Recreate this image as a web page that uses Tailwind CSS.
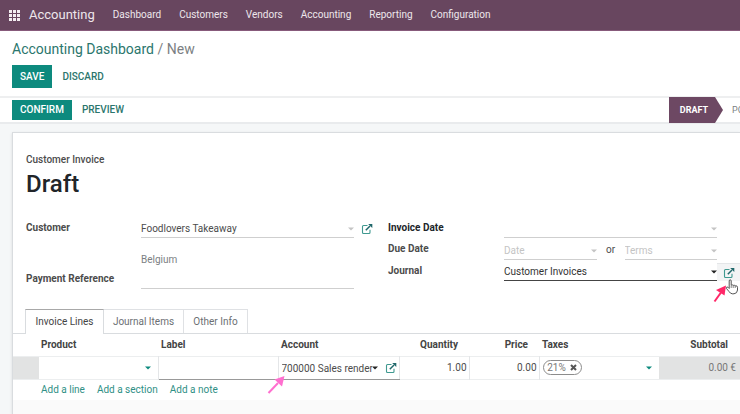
<!DOCTYPE html>
<html lang="en">
  <head>
    <meta charset="UTF-8" />
    <meta name="viewport" content="width=device-width, initial-scale=1.0" />
    <title>New - Accounting</title>
    <script src="https://cdn.jsdelivr.net/npm/@tailwindcss/browser@4"></script>
  </head>
  <body class="font-['Roboto',sans-serif] text-[10px] leading-4 text-[#4c4c4c] bg-[#f5f7f8]">
    <!-- Shared icons -->
    <svg class="hidden">
      <symbol id="external" viewBox="0 0 12 12">
        <path d="M6.5 2.5H2.5Q1.5 2.5 1.5 3.5V9.5Q1.5 10.5 2.5 10.5H8Q9 10.5 9 9.5V6.8" fill="none" stroke="#3f9990" stroke-width="1.1" />
        <path d="M4.8 7.2L9 3" fill="none" stroke="#20686b" stroke-width="1.5" />
        <path d="M7.2 1H11.3V5.1Z" fill="#20686b" />
      </symbol>
      <symbol id="caret" viewBox="0 0 6 4">
        <path d="M0 0.5H6L3 3.5Z" fill="currentColor" />
      </symbol>
    </svg>

    <div class="min-h-screen flex flex-col overflow-hidden">
      <!-- Navbar -->
      <header class="h-[31px] shrink-0 flex items-center pl-[9px] bg-[#68465f] border-b border-[#875a7b] text-[#eee6ec]">
        <button aria-label="Apps" class="mr-[9px]">
          <svg class="w-[11px] h-[11px]" viewBox="0 0 11 11" fill="#f3edf1">
            <path d="M0 0h3v3H0zM4 0h3v3H4zM8 0h3v3H8zM0 4h3v3H0zM4 4h3v3H4zM8 4h3v3H8zM0 8h3v3H0zM4 8h3v3H4zM8 8h3v3H8z" />
          </svg>
        </button>
        <a href="#" class="text-[13px] mr-[18px]">Accounting</a>
        <nav class="flex gap-[18px]">
          <a href="#">Dashboard</a>
          <a href="#">Customers</a>
          <a href="#">Vendors</a>
          <a href="#">Accounting</a>
          <a href="#">Reporting</a>
          <a href="#">Configuration</a>
        </nav>
      </header>

      <!-- Control panel -->
      <div class="bg-white pl-3 pt-2 pb-2 border-b-2 border-[#eeeff0]">
        <div class="text-[14px] leading-5 text-[#7c7f83]">
          <a href="#" class="text-[#2b766d]">Accounting Dashboard</a> / <span>New</span>
        </div>
        <div class="flex items-center mt-[6px]">
          <button class="h-[23px] px-2 bg-[#0d8a7e] text-white font-medium">SAVE</button>
          <button class="h-[23px] px-[10px] text-[#2b766d] font-medium">DISCARD</button>
        </div>
      </div>

      <!-- Status bar -->
      <div class="bg-white pl-3 flex items-center justify-between h-[26px] shrink-0 border-b-2 border-[#e9ebed]">
        <div class="flex items-center">
          <button class="h-5 px-2 bg-[#0d8a7e] text-white font-medium">CONFIRM</button>
          <button class="h-5 px-[10px] text-[#2b766d] font-medium">PREVIEW</button>
        </div>
        <div class="flex w-[71px] h-[26px] overflow-hidden text-[9px]">
          <button class="w-[54px] h-[26px] shrink-0 pr-1 bg-[#6d4863] text-white font-bold [clip-path:polygon(0_0,46px_0,54px_50%,46px_100%,0_100%)]">DRAFT</button>
          <button class="shrink-0 pl-[9px] text-[#7c7f83]">POSTED</button>
        </div>
      </div>

      <!-- Invoice sheet -->
      <main class="flex-1 flex flex-col bg-white ml-3 mt-2 border-l border-t border-[#d9dcdf] shadow-sm">
        <div class="pl-[13px] pt-[19px]">
          <div class="font-medium">Customer Invoice</div>
          <h1 class="font-medium text-[24px] leading-8 text-[#212529]">Draft</h1>
        </div>

        <form class="grid grid-cols-[362fr_352fr] pl-[13px] mt-[17px]">
          <div class="grid grid-cols-[115px_1fr_34px] content-start">
            <label for="customer" class="font-bold pt-[3px]">Customer</label>
            <div class="relative h-[21px] border-b border-[#cfcfcf]">
              <select id="customer" class="appearance-none w-full h-5 pt-[3px]">
                <option>Foodlovers Takeaway</option>
              </select>
              <svg class="absolute right-0 top-[10px] w-[6px] h-1 text-[#c4c4c4]"><use href="#caret" /></svg>
            </div>
            <button type="button" aria-label="Open customer" class="pl-[7px] pt-[2px]">
              <svg class="w-3 h-3"><use href="#external" /></svg>
            </button>

            <div class="col-start-2 h-[33px] pt-[14px] text-[#7c7f83]">Belgium</div>

            <label for="reference" class="col-start-1 font-bold">Payment Reference</label>
            <input id="reference" type="text" class="h-[18px] w-full border-b border-[#cfcfcf] outline-none" />
          </div>

          <div class="grid grid-cols-[116px_1fr_23px] content-start">
            <label for="invoice-date" class="font-bold text-[#212529] pt-[3px]">Invoice Date</label>
            <div class="relative h-[21px] border-b border-[#cfcfcf]">
              <input id="invoice-date" type="text" class="w-full h-5 outline-none" />
              <svg class="absolute right-0 top-[10px] w-[6px] h-1 text-[#c4c4c4]"><use href="#caret" /></svg>
            </div>

            <label for="due-date" class="col-start-1 font-bold pt-[3px]">Due Date</label>
            <div class="flex">
              <div class="relative flex-1 h-[22px] border-b border-[#cfcfcf]">
                <input id="due-date" type="text" placeholder="Date" class="w-full h-[21px] pt-1 placeholder:text-[#c4c4c4] outline-none" />
                <svg class="absolute right-0 top-[11px] w-[6px] h-1 text-[#c4c4c4]"><use href="#caret" /></svg>
              </div>
              <span class="w-7 pt-1 text-center">or</span>
              <div class="relative flex-1 h-[22px] border-b border-[#cfcfcf]">
                <select aria-label="Terms" class="appearance-none w-full h-[21px] pt-1 text-[#c4c4c4]">
                  <option>Terms</option>
                </select>
                <svg class="absolute right-0 top-[11px] w-[6px] h-1 text-[#c4c4c4]"><use href="#caret" /></svg>
              </div>
            </div>

            <label for="journal" class="col-start-1 font-bold pt-[3px]">Journal</label>
            <div class="relative h-[21px] border-b border-[#444444]">
              <select id="journal" class="appearance-none w-full h-5 pt-[3px] text-[#333333]">
                <option>Customer Invoices</option>
              </select>
              <svg class="absolute right-0 top-[10px] w-[6px] h-1 text-[#222222]"><use href="#caret" /></svg>
            </div>
            <div class="relative">
              <button type="button" aria-label="Open journal" class="block w-full h-[18px] mt-[3px] pl-[6px] bg-[#f3f4f5] border-t border-[#e4e6e8]">
                <svg class="block w-3 h-3"><use href="#external" /></svg>
              </button>
              <!-- Pointer hand and callout arrow -->
              <svg class="absolute left-[8px] top-[19px] w-[14px] h-[16px]" viewBox="0 0 14 16">
                <path d="M4.2 9.5V2Q4.2 .8 5.2 .8T6.2 2V6.2Q7.4 5.4 8.2 6.4Q9.3 5.7 10.1 6.8Q12.4 6.3 12.5 8.3V11Q12.3 14.5 9 14.8H7.2Q5.2 14.5 3.9 12.4L1.3 9.3Q1 8.2 2.1 8Q3.2 8 4.2 9.5Z" fill="#fff" stroke="#555" stroke-width="1" />
                <path d="M6.2 6.5V9M8.2 6.5V9M10.2 7V9" stroke="#666" stroke-width=".8" />
              </svg>
              <svg class="absolute left-[-4px] top-[25px] w-[14px] h-[18px]" viewBox="0 0 14 18">
                <path d="M1.5 16.5L8 7.5" stroke="#ff2768" stroke-width="2" />
                <path d="M13 0.5L11.5 10.5L3 5Z" fill="#ff2768" />
              </svg>
            </div>
          </div>
        </form>

        <!-- Notebook tabs -->
        <div role="tablist" class="flex h-[25px] mt-5 pl-3 border-b border-[#d9dcdf]">
          <button role="tab" aria-selected="true" class="w-[79px] h-[25px] bg-white border-x border-t border-x-[#d9dcdf] border-t-[#a8a8a8] text-[#444444]">Invoice Lines</button>
          <button role="tab" class="w-20 h-6 border-r border-t border-[#dfe1e4] text-[#6c6f73]">Journal Items</button>
          <button role="tab" class="w-16 h-6 border-r border-t border-[#dfe1e4] text-[#6c6f73]">Other Info</button>
        </div>

        <table class="w-full table-fixed text-left">
          <colgroup>
            <col class="w-[26px]" />
            <col />
            <col class="w-[120px]" />
            <col class="w-[121px]" />
            <col class="w-[70px]" />
            <col class="w-[70px]" />
            <col class="w-[120px]" />
            <col class="w-[81px]" />
          </colgroup>
          <thead>
            <tr class="h-[22px] text-[#444444] border-b border-[#eceeef]">
              <th></th>
              <th class="pl-[2px] font-bold">Product</th>
              <th class="pl-[3px] font-bold">Label</th>
              <th class="pl-[3px] font-bold">Account</th>
              <th class="pr-[11px] font-bold text-right">Quantity</th>
              <th class="pr-[11px] font-bold text-right">Price</th>
              <th class="pl-[3px] font-bold">Taxes</th>
              <th class="pr-3 font-bold text-right">Subtotal</th>
            </tr>
          </thead>
          <tbody>
            <tr class="h-[23px] border-b border-[#eceeef]">
              <td class="bg-[#e2e3e3]"></td>
              <td class="relative border-r border-[#e4e6e8]">
                <select aria-label="Product" class="appearance-none block w-full h-[22px]"><option></option></select>
                <svg class="absolute right-[7px] top-[9px] w-[6px] h-1 text-[#0d8a7e]"><use href="#caret" /></svg>
              </td>
              <td class="border-r border-r-[#e4e6e8] border-b border-b-[#999999]">
                <input aria-label="Label" type="text" class="block w-full h-[21px] outline-none" />
              </td>
              <td class="relative border-r border-r-[#e4e6e8] border-b border-b-[#999999]">
                <div class="flex items-center pl-[3px]">
                  <input aria-label="Account" type="text" value="700000 Sales rendered" class="w-[90px] h-[21px] pt-[2px] outline-none" />
                  <svg class="w-[6px] h-1 text-[#222222]"><use href="#caret" /></svg>
                  <button aria-label="Open account" class="ml-[7px]">
                    <svg class="block w-3 h-3"><use href="#external" /></svg>
                  </button>
                </div>
                <svg class="absolute left-[-12px] top-[18px] w-[19px] h-5" viewBox="0 0 19 20">
                  <path d="M1.5 18L11 8" stroke="#ff6fcf" stroke-width="2" />
                  <path d="M17.5 1L15 11.5L7.5 4.5Z" fill="#ff6fcf" />
                </svg>
              </td>
              <td class="border-r border-[#e4e6e8]">
                <input aria-label="Quantity" type="text" value="1.00" class="block w-full h-[22px] pr-[2px] text-right outline-none" />
              </td>
              <td class="border-r border-[#e4e6e8]">
                <input aria-label="Price" type="text" value="0.00" class="block w-full h-[22px] pr-[2px] text-right outline-none" />
              </td>
              <td class="relative pl-[3px]">
                <span class="flex items-center justify-center gap-1 w-[39px] h-[15px] border border-[#8c8c8c] rounded-full text-[#777777]">
                  21%
                  <button aria-label="Remove tax">
                    <svg class="block w-[7px] h-[7px]" viewBox="0 0 7 7"><path d="M1 1L6 6M6 1L1 6" stroke="#555" stroke-width="2" /></svg>
                  </button>
                </span>
                <svg class="absolute right-[7px] top-[9px] w-[6px] h-1 text-[#0d8a7e]"><use href="#caret" /></svg>
              </td>
              <td class="bg-[#e2e3e3] pr-1 text-right text-[#777777]">0.00 €</td>
            </tr>
          </tbody>
        </table>
        <div class="flex gap-3 h-5 items-center pl-7 text-[#2f8f85]">
          <a href="#">Add a line</a>
          <a href="#">Add a section</a>
          <a href="#">Add a note</a>
        </div>
        <div class="flex-1 bg-[#fafafa]"></div>
      </main>
    </div>
  </body>
</html>
